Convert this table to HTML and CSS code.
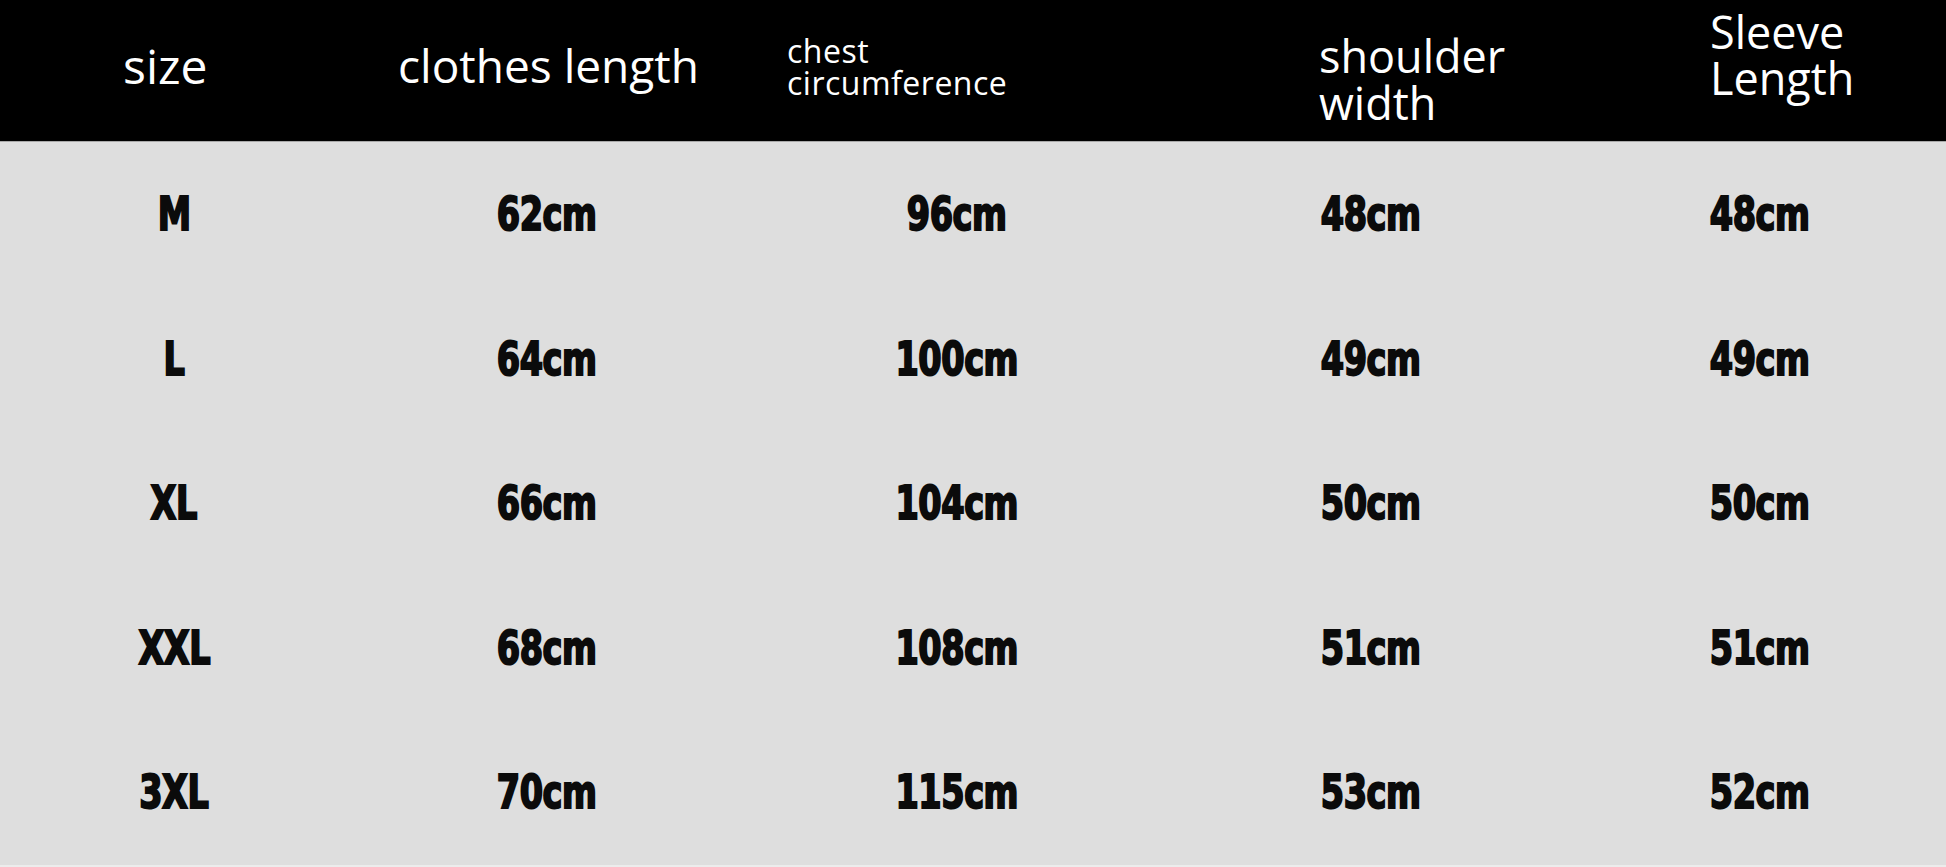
FILE: index.html
```html
<!DOCTYPE html>
<html lang="en">
<head>
<meta charset="utf-8">
<title>Size chart</title>
<link rel="stylesheet" href="styles.css">
</head>
<body>
<div class="chart">
  <div class="head">
    <div class="hcell h-size">size</div>
    <div class="hcell h-length">clothes length</div>
    <div class="hcell h-chest">chest<br>circumference</div>
    <div class="hcell h-shoulder">shoulder<br>width</div>
    <div class="hcell h-sleeve">Sleeve<br>Length</div>
  </div>
  <div class="body">
    <div class="row"><div class="cell"><span>M</span></div><div class="cell"><span>62cm</span></div><div class="cell"><span>96cm</span></div><div class="cell"><span>48cm</span></div><div class="cell"><span>48cm</span></div></div>
    <div class="row"><div class="cell"><span>L</span></div><div class="cell"><span>64cm</span></div><div class="cell"><span>100cm</span></div><div class="cell"><span>49cm</span></div><div class="cell"><span>49cm</span></div></div>
    <div class="row"><div class="cell"><span>XL</span></div><div class="cell"><span>66cm</span></div><div class="cell"><span>104cm</span></div><div class="cell"><span>50cm</span></div><div class="cell"><span>50cm</span></div></div>
    <div class="row"><div class="cell"><span>XXL</span></div><div class="cell"><span>68cm</span></div><div class="cell"><span>108cm</span></div><div class="cell"><span>51cm</span></div><div class="cell"><span>51cm</span></div></div>
    <div class="row"><div class="cell"><span>3XL</span></div><div class="cell"><span>70cm</span></div><div class="cell"><span>115cm</span></div><div class="cell"><span>53cm</span></div><div class="cell"><span>52cm</span></div></div>
  </div>
  <div class="foot"></div>
</div>
</body>
</html>
```
FILE: styles.css
```css
html, body {
  margin: 0;
  padding: 0;
  background: #ececec;
}
.chart {
  width: 1946px;
  height: 867px;
  overflow: hidden;
  display: flex;
  flex-direction: column;
}
.head, .row {
  display: grid;
  grid-template-columns: 348px 398px 422px 406px 372px;
}
.head {
  height: 141px;
  background: #000;
  border-bottom: 1px solid #a8a8a8;
  color: #fff;
  font-family: "Open Sans", "DejaVu Sans", sans-serif;
  font-weight: 400;
  align-items: start;
}
.hcell {
  white-space: nowrap;
}
.h-size {
  font-size: 48px;
  line-height: 48px;
  padding-top: 42px;
  padding-left: 123px;
}
.h-length {
  font-size: 46px;
  line-height: 46px;
  padding-top: 42px;
  padding-left: 50px;
}
.h-chest {
  font-size: 32px;
  line-height: 32px;
  letter-spacing: 0.5px;
  padding-top: 35px;
  padding-left: 41px;
}
.h-shoulder {
  font-size: 45px;
  line-height: 47px;
  padding-top: 32px;
  padding-left: 151px;
}
.h-sleeve {
  font-size: 45px;
  line-height: 46px;
  padding-top: 9px;
  padding-left: 136px;
}
.body {
  background: #dedede;
  display: flex;
  flex-direction: column;
}
.row {
  height: 144.5px;
  align-items: center;
}
.cell {
  display: flex;
  justify-content: center;
  align-items: center;
}
.cell span {
  display: inline-block;
  font-family: "DejaVu Sans", sans-serif;
  font-stretch: condensed;
  font-weight: 700;
  font-size: 46px;
  line-height: 46px;
  color: #0b0b0b;
  -webkit-text-stroke: 2px #0b0b0b;
  transform: scaleX(0.81);
  letter-spacing: -0.5px;
}
.foot {
  flex: 1;
  background: #ececec;
}
```
